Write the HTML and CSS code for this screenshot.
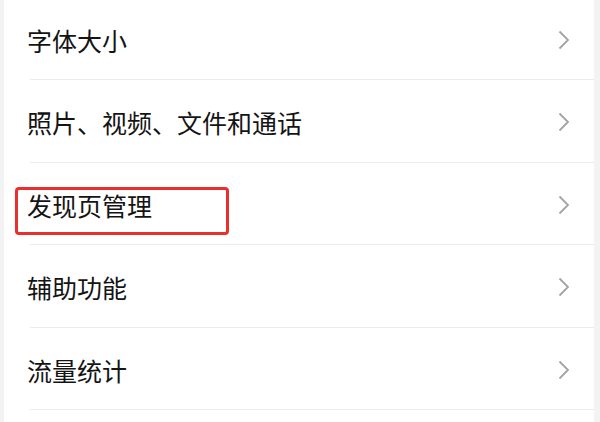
FILE: index.html
```html
<!DOCTYPE html>
<html lang="zh-CN">
<head>
<meta charset="utf-8">
<link rel="stylesheet" href="styles.css">
</head>
<body>
<div class="list">
  <div class="item"><div class="inner"><span class="label">字体大小</span><svg class="chev" viewBox="0 0 12 20"><path d="M1.5 1.5 L10 10 L1.5 18.5"/></svg></div></div>
  <div class="item"><div class="inner"><span class="label">照片、视频、文件和通话</span><svg class="chev" viewBox="0 0 12 20"><path d="M1.5 1.5 L10 10 L1.5 18.5"/></svg></div></div>
  <div class="item highlighted"><div class="inner"><span class="label">发现页管理</span><svg class="chev" viewBox="0 0 12 20"><path d="M1.5 1.5 L10 10 L1.5 18.5"/></svg></div><div class="mark"></div></div>
  <div class="item"><div class="inner"><span class="label">辅助功能</span><svg class="chev" viewBox="0 0 12 20"><path d="M1.5 1.5 L10 10 L1.5 18.5"/></svg></div></div>
  <div class="item"><div class="inner"><span class="label">流量统计</span><svg class="chev" viewBox="0 0 12 20"><path d="M1.5 1.5 L10 10 L1.5 18.5"/></svg></div></div>
  <div class="item"><div class="inner"></div></div>
</div>
</body>
</html>
```
FILE: styles.css
```css
html, body {
  margin: 0;
  padding: 0;
  background: #f3f3f3;
  height: 100%;
  overflow: hidden;
}
.list {
  margin: -2.5px 6px 0 4px;
  background: #ffffff;
  font-family: "Noto Sans CJK SC", "Noto Sans", sans-serif;
}
.item {
  position: relative;
  padding-left: 26px;
}
.inner {
  height: 78.5px;
  border-bottom: 1px solid #ececec;
  display: flex;
  align-items: center;
  justify-content: space-between;
  padding-right: 24px;
  padding-top: 3px;
  box-sizing: content-box;
}
.label {
  font-size: 25px;
  color: #141414;
  margin-left: -3px;
}
.chev {
  width: 12px;
  height: 20px;
  fill: none;
  stroke: #a3a3a3;
  stroke-width: 1.8;
}
.mark {
  position: absolute;
  left: 11px;
  top: 24px;
  width: 208px;
  height: 42px;
  border: 3px solid #e8302c;
  border-radius: 4px;
}
```
